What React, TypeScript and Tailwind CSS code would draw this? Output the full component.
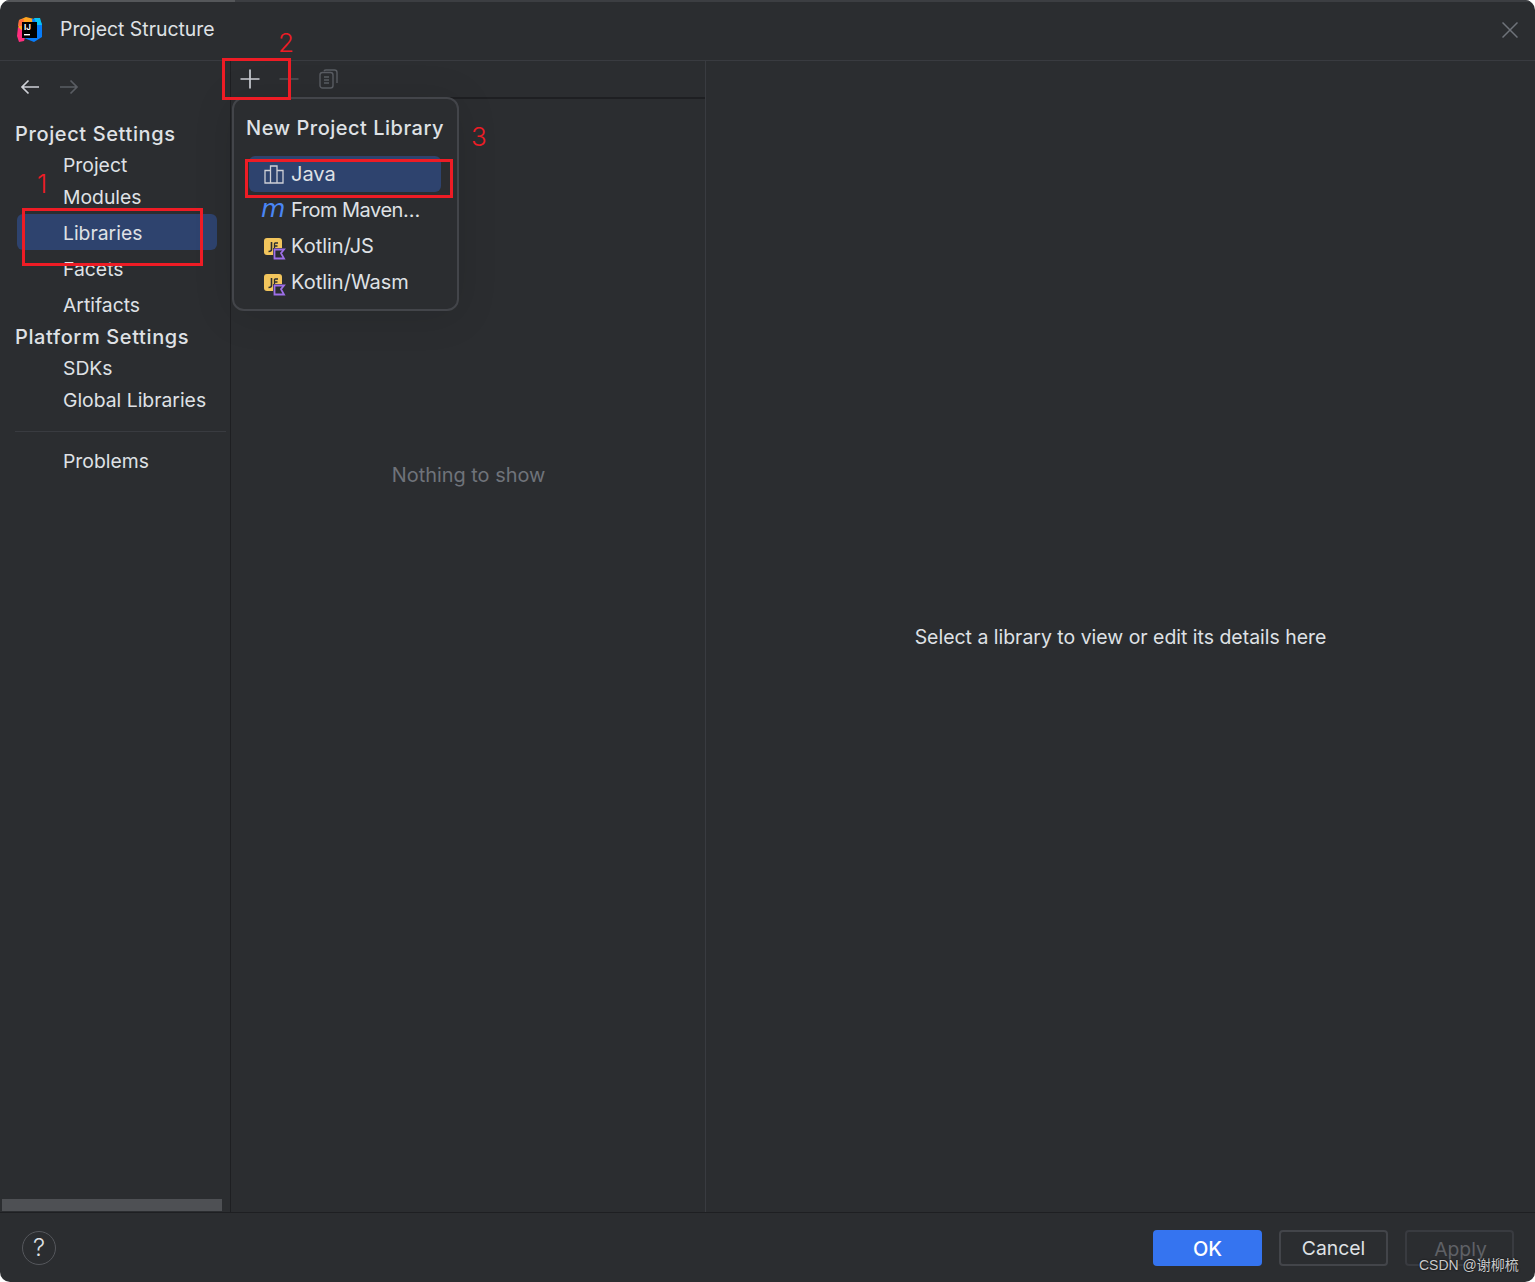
import React from "react";

const font = { fontFamily: "Inter, 'Noto Sans CJK SC', sans-serif" };

function Jb() {
  return (
    <svg width="22" height="22" viewBox="0 0 22 22" className="ml-[1px] shrink-0 overflow-visible">
      <rect x="0" y="3" width="18" height="17" rx="3" fill="#f2c55c" />
      <path d="M7.5 7V14.5C7.5 16 6.5 16.5 4.5 16.5" stroke="#2b2d30" strokeWidth="1.6" fill="none" />
      <path d="M10.5 8H14M10.5 11H13.5M10.5 8V14" stroke="#2b2d30" strokeWidth="1.3" fill="none" />
      <path d="M9 13H23L19.6 18L23 25H9Z" fill="#2b2d30" />
      <path d="M10.5 14.5H20L17 18.2L20 23.5H10.5Z" fill="none" stroke="#9d6fe8" strokeWidth="1.8" />
    </svg>
  );
}

function PopupRow({ icon, label, sel, cls = "" }: { icon: React.ReactNode; label: string; sel?: boolean; cls?: string }) {
  return (
    <div className={"flex h-9 items-center rounded-md pl-[14px] " + (sel ? "bg-[#2e436e]" : "")}>
      <span className="flex w-[28px] shrink-0 items-center">{icon}</span>
      <span className={"whitespace-nowrap text-[20px] leading-none text-[#dfe1e5] " + cls}>{label}</span>
    </div>
  );
}

function NavItem({ label, h, sel }: { label: string; h: string; sel?: boolean }) {
  return (
    <div className={h + " flex items-center rounded-md pl-[46px] text-[19.35px] text-[#dfe1e5] " + (sel ? "bg-[#2e436e]" : "")}>
      {label}
    </div>
  );
}

function Head({ label, cls }: { label: string; cls: string }) {
  return <div className={cls + " -ml-[2px] flex items-center text-[20px] font-medium tracking-[0.62px] text-[#dfe1e5]"}>{label}</div>;
}

function Mark({ cls }: { cls: string }) {
  return <div className={"pointer-events-none absolute border-[3px] border-[#ee1c25] " + cls} />;
}

function Num({ cls, n }: { cls: string; n: string }) {
  return <div className={"pointer-events-none absolute text-[26px] font-light leading-none text-[#ee1c25] " + cls}>{n}</div>;
}

export default function App() {
  return (
    <div style={font} className="relative flex h-[1282px] w-[1535px] flex-col overflow-hidden rounded-[10px] bg-[#2b2d30] text-[#dfe1e5]">
      <div className="absolute left-0 right-0 top-0 flex h-[2px]">
        <div className="w-[235px] bg-[#55575a]" />
        <div className="flex-1 bg-[#3c3e42]" />
      </div>
      {/* title */}
      <div className="flex h-[61px] shrink-0 items-center border-b border-[#393b40] pl-[17px] pr-[17px]">
        <svg width="26" height="26" viewBox="0 0 26 26" className="shrink-0">
          <path d="M2 3L9 0L17 2L12 14L5 20L1 14Z" fill="#ffa51f" />
          <path d="M1 10L9 17L7 24L2 25L0 19Z" fill="#ff2e7e" />
          <path d="M2 3L7 2L6 9L1 9Z" fill="#ff6a3d" />
          <path d="M15 2L22 1L25 7L25 20L17 25L7 21L16 12Z" fill="#087cfa" />
          <path d="M17 1L23 1L25 8L20 8Z" fill="#07c3f2" />
          <rect x="5" y="5" width="15" height="16" fill="#000" />
          <text x="7" y="13" fontSize="8" fontWeight="700" fill="#fff" fontFamily="Inter">IJ</text>
          <rect x="7" y="17" width="6" height="1.4" fill="#fff" />
        </svg>
        <div className="ml-[17px] text-[19.4px] text-[#dfe1e5]">Project Structure</div>
        <svg width="16" height="16" viewBox="0 0 16 16" className="ml-auto" stroke="#6f737a" strokeWidth="1.5" fill="none">
          <path d="M0.5 0.5L15.5 15.5M15.5 0.5L0.5 15.5" />
        </svg>
      </div>
      {/* body */}
      <div className="flex min-h-0 flex-1">
        {/* side */}
        <div className="relative flex w-[231px] shrink-0 flex-col border-r border-[#1e1f22]">
          <div className="flex h-[51px] items-center gap-[19px] pl-[20px]">
            <svg width="20" height="16" viewBox="0 0 20 16" fill="none" stroke="#ced0d6" strokeWidth="1.7"><path d="M19 8H2M8.5 1.5L2 8L8.5 14.5" /></svg>
            <svg width="20" height="16" viewBox="0 0 20 16" fill="none" stroke="#5a5d63" strokeWidth="1.7"><path d="M1 8H18M11.5 1.5L18 8L11.5 14.5" /></svg>
          </div>
          <div className="pl-[17px] pr-[13px]">
            <Head label="Project Settings" cls="h-[37px] pt-[7px]" />
            <NavItem label="Project" h="h-[30px] pt-[2px]" />
            <NavItem label="Modules" h="h-[35px] pt-[3px]" />
            <NavItem label="Libraries" h="h-9 pt-[4px]" sel />
            <NavItem label="Facets" h="h-[37px] pt-[3px]" />
            <NavItem label="Artifacts" h="h-[35px] pt-[2px]" />
            <Head label="Platform Settings" cls="h-[30px]" />
            <NavItem label="SDKs" h="h-[30px] pt-[2px]" />
            <NavItem label="Global Libraries" h="h-9 pt-[2px]" />
          </div>
          <div className="mb-[12px] ml-[15px] mr-[4px] mt-[13px] h-px bg-[#393b40]" />
          <div className="pl-[17px] pr-[13px]"><NavItem label="Problems" h="h-[34px] pt-[2px]" /></div>
          <div className="mb-[1px] ml-[2px] mt-auto h-[12px] w-[220px] bg-[#4e5054]" />
        </div>
        {/* middle */}
        <div className="flex w-[475px] shrink-0 flex-col border-r border-[#393b40]">
          <div className="flex h-[38px] shrink-0 items-center gap-[19px] border-b-2 border-[#1e1f22] pl-[9px]">
            <svg width="20" height="20" viewBox="0 0 20 20" fill="none" stroke="#ced0d6" strokeWidth="1.7"><path d="M10 0.5V19.5M0.5 10H19.5" /></svg>
            <svg width="20" height="20" viewBox="0 0 20 20" fill="none" stroke="#4e5054" strokeWidth="1.7"><path d="M0.5 10H19.5" /></svg>
            <svg width="20" height="20" viewBox="0 0 20 20" fill="none" stroke="#5a5d63" strokeWidth="1.4" className="ml-[1px]">
              <rect x="1" y="3.5" width="13" height="15.5" rx="2.5" />
              <path d="M5 2C5.5 1.3 6 1 7 1H15.5C17 1 18 2 18 3.5V14" />
              <path d="M5 8H10M5 11H10M5 14H10" />
            </svg>
          </div>
          <div className="flex flex-1 justify-center pl-[1px] pt-[362px] text-[19.9px] text-[#6f737a]">Nothing to show</div>
        </div>
        {/* right */}
        <div className="flex flex-1 items-center justify-center pt-[2px] text-[19.45px] text-[#dfe1e5]">
          Select a library to view or edit its details here
        </div>
      </div>
      {/* footer */}
      <div className="flex h-[70px] shrink-0 items-center border-t border-[#1e1f22] pl-[22px] pr-[21px]">
        <div className="flex h-[34px] w-[34px] items-center justify-center rounded-full border border-[#55575c] text-[24px] font-light text-[#dfe1e5]">?</div>
        <div className="ml-auto flex items-center gap-[17px]">
          <div className="flex h-9 w-[109px] items-center justify-center rounded-[4px] bg-[#3574f0] pt-[2px] text-[20px] font-medium text-white">OK</div>
          <div className="flex h-9 w-[109px] items-center justify-center rounded-[4px] border-2 border-[#43454a] pt-[2px] text-[19.35px] text-[#dfe1e5]">Cancel</div>
          <div className="flex h-9 w-[109px] items-center justify-center rounded-[4px] border-2 border-[#393b40] pl-[2px] pt-[3px] text-[19.35px] text-[#5f6166]">Apply</div>
        </div>
      </div>

      {/* popup */}
      <div className="absolute left-[232px] top-[97px] h-[214px] w-[227px] rounded-[12px] border-2 border-[#43454a] bg-[#2b2d30] px-[12px] shadow-[0_4px_40px_rgba(0,0,0,0.12)]">
        <div className="flex h-[57px] items-center whitespace-nowrap text-[20px] font-medium tracking-[0.5px] text-[#dfe1e5]">New Project Library</div>
        <div className="ml-[3px] w-[192px]">
          <PopupRow sel label="Java" icon={
            <svg width="20" height="19" viewBox="0 0 20 19" fill="none" stroke="#ced0d6" strokeWidth="1.3" className="ml-[1px]">
              <path d="M1 5.5H6.5V18H1ZM6.5 1H13V18H6.5ZM13 5.5H19V18H13Z" />
            </svg>
          } />
          <PopupRow label="From Maven…" cls="tracking-[-0.5px]" icon={<span className="-ml-[2px] -mt-[4px] text-[25px] italic leading-none text-[#4a86f5]" style={{ fontFamily: "'DejaVu Sans', sans-serif" }}>m</span>} />
          <PopupRow label="Kotlin/JS" icon={<Jb />} />
          <PopupRow label="Kotlin/Wasm" icon={<Jb />} />
        </div>
      </div>

      {/* annotations */}
      <Mark cls="left-[22px] top-[208px] h-[58px] w-[181px]" />
      <Mark cls="left-[222px] top-[58px] h-[42px] w-[69px]" />
      <Mark cls="left-[245px] top-[159px] h-[39px] w-[208px]" />
      <Num cls="left-[37px] top-[171px]" n="1" />
      <Num cls="left-[278px] top-[30px]" n="2" />
      <Num cls="left-[471px] top-[124px]" n="3" />
      <div className="absolute left-[1419px] top-[1256px] text-[14px] leading-[18px] text-[#c9cacc] [text-shadow:0_0_2px_#000]" style={{ fontFamily: "'Liberation Sans', 'Noto Sans CJK SC', sans-serif" }}>CSDN @谢柳梳</div>
    </div>
  );
}
